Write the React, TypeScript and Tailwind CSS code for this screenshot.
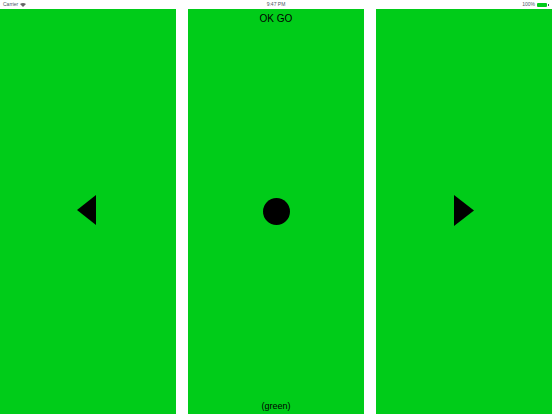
export default function App() {
  const font = { fontFamily: '"Liberation Sans", Arial, sans-serif' };
  return (
    <div className="flex h-[414px] w-[552px] flex-col bg-white" style={font}>
      {/* Status bar */}
      <div className="relative flex h-[9px] items-center justify-between px-[3px] text-[5px] leading-none text-gray-600">
        <div className="flex items-center gap-[2px]">
          <span>Carrier</span>
          <svg width="6" height="4" viewBox="0 0 6 4">
            <path d="M3 4 L0 1 Q3 -1 6 1 Z" fill="#666" />
          </svg>
        </div>
        <span className="absolute left-1/2 -translate-x-1/2">9:47 PM</span>
        <div className="flex items-center gap-[2px]">
          <span>100%</span>
          <div className="flex items-center">
            <div className="h-[4px] w-[10px] rounded-[1px] bg-[#00cc19]" />
            <div className="ml-[1px] h-[2px] w-[1px] bg-gray-600" />
          </div>
        </div>
      </div>

      {/* Panels */}
      <div className="flex flex-1 gap-[12px]">
        <div className="flex w-[176px] items-center justify-center bg-[#00cc19] pb-[3px] pr-[3px]">
          <svg width="19" height="30" viewBox="0 0 19 30">
            <path d="M0 15 L19 0 L19 30 Z" fill="#000" />
          </svg>
        </div>

        <div className="flex w-[176px] flex-col items-center bg-[#00cc19]">
          <div className="pt-[3px] text-[10px] leading-[14px] text-black">OK GO</div>
          <div className="flex flex-1 items-center justify-center pb-[4px]">
            <div className="h-[27px] w-[27px] rounded-full bg-black" />
          </div>
          <div className="pb-[2px] text-[9px] leading-[12px] text-black">(green)</div>
        </div>

        <div className="flex w-[176px] items-center justify-center bg-[#00cc19] pb-[2px]">
          <svg width="20" height="31" viewBox="0 0 20 31">
            <path d="M0 0 L20 15.5 L0 31 Z" fill="#000" />
          </svg>
        </div>
      </div>
    </div>
  );
}
